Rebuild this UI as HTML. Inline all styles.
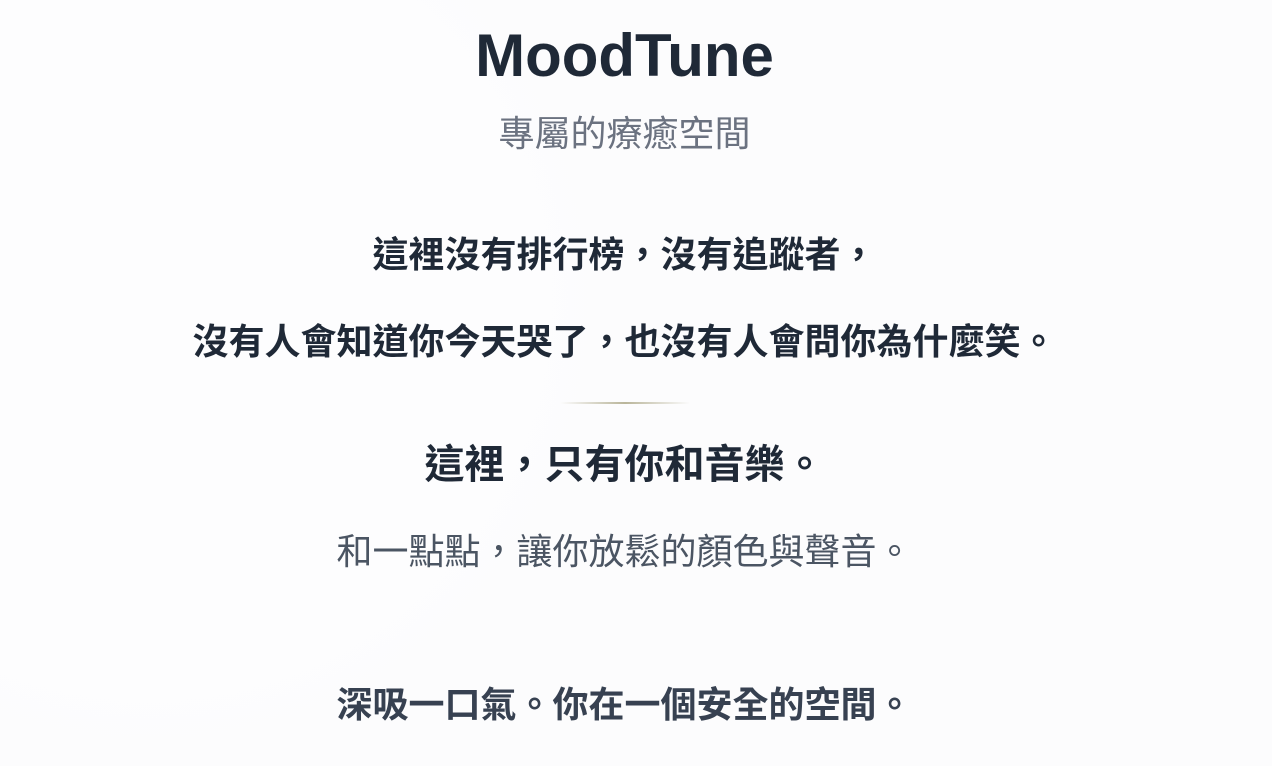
<!DOCTYPE html>
<html><head><meta charset="utf-8"><style>
html,body{margin:0;width:1272px;height:766px;overflow:hidden;background:#fcfcfd;}
body{position:relative;font-family:"Liberation Sans","Noto Sans CJK TC",sans-serif;color:#1f2937;}
.wrap{position:absolute;left:0;top:0;width:1272px;height:766px;overflow:hidden;}
.l{position:absolute;left:0;width:1249px;text-align:center;white-space:nowrap;line-height:1;}
.bg{position:absolute;left:-300px;top:-150px;width:900px;height:900px;border-radius:50%;background:radial-gradient(circle,#fdfdfe 0%,#fdfdfe 60%,rgba(252,252,253,0) 72%);}
</style></head><body><div class="wrap">
<div class="bg"></div>
<div class="l" style="top:26px;font-size:60px;font-weight:bold;color:#1f2937;">MoodTune</div>
<div class="l" style="top:116px;font-size:36px;color:#6b7280;">專屬的療癒空間</div>
<div class="l" style="top:237px;font-size:36px;font-weight:bold;">這裡沒有排行榜，沒有追蹤者，</div>
<div class="l" style="top:324px;font-size:36px;font-weight:bold;">沒有人會知道你今天哭了，也沒有人會問你為什麼笑。</div>
<div style="position:absolute;left:560px;top:402px;width:130px;height:2px;background:linear-gradient(90deg,rgba(200,195,170,0),#b9b59a,rgba(200,195,170,0));"></div>
<div class="l" style="top:445px;font-size:40px;font-weight:bold;">這裡，只有你和音樂。</div>
<div class="l" style="top:534px;font-size:36px;color:#4b5563;">和一點點，讓你放鬆的顏色與聲音。</div>
<div class="l" style="top:687px;font-size:36px;font-weight:bold;color:#374151;">深吸一口氣。你在一個安全的空間。</div>
</div></body></html>
